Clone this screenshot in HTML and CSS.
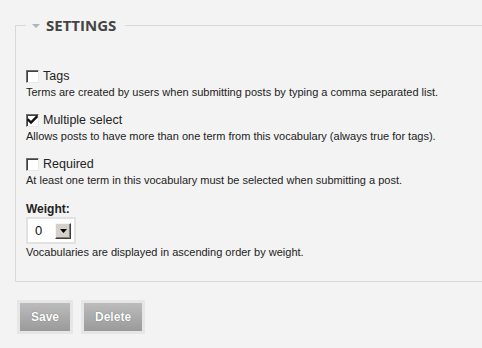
FILE: index.html
```html
<!DOCTYPE html>
<html>
<head>
<meta charset="utf-8">
<link rel="stylesheet" href="styles.css">
</head>
<body>
<form class="page">
  <fieldset class="settings">
    <legend class="legend"><span class="arrow"></span><span class="legend-text">SETTINGS</span></legend>

    <div class="item">
      <label class="check-row"><span class="box"></span><span class="label">Tags</span></label>
      <div class="desc">Terms are created by users when submitting posts by typing a comma separated list.</div>
    </div>

    <div class="item">
      <label class="check-row"><span class="box"><svg viewBox="0 0 11 11" width="11" height="11"><path d="M1.5 5 L4 7.5 L9.5 2" fill="none" stroke="#111" stroke-width="2.4" stroke-linecap="square"/></svg></span><span class="label">Multiple select</span></label>
      <div class="desc">Allows posts to have more than one term from this vocabulary (always true for tags).</div>
    </div>

    <div class="item">
      <label class="check-row"><span class="box"></span><span class="label">Required</span></label>
      <div class="desc">At least one term in this vocabulary must be selected when submitting a post.</div>
    </div>

    <div class="item weight">
      <div class="weight-label">Weight:</div>
      <div class="select">
        <span class="select-value">0</span>
        <span class="select-btn"><svg viewBox="0 0 7 4" width="7" height="4"><path d="M0 0 H7 L3.5 4 Z" fill="#000"/></svg></span>
      </div>
      <div class="desc desc-tight">Vocabularies are displayed in ascending order by weight.</div>
    </div>
  </fieldset>

  <div class="actions">
    <span class="btn-frame"><button type="button" class="btn">Save</button></span>
    <span class="btn-frame"><button type="button" class="btn">Delete</button></span>
  </div>
</form>
</body>
</html>
```
FILE: styles.css
```css
html, body {
  margin: 0;
  padding: 0;
  background: #f3f3f3;
  overflow: hidden;
}

body {
  font-family: "Liberation Sans", Arial, sans-serif;
  color: #222;
  width: 482px;
  height: 348px;
}

.page {
  padding-top: 15px;
}

.settings {
  margin: 0 -20px 0 15px;
  padding: 34px 10px 22px 10px;
  border: 1px solid #d8d8d8;
  min-width: 0;
}

.legend {
  padding: 0 9px 0 6px;
  height: 20px;
  line-height: 20px;
  display: flex;
  align-items: center;
}

.arrow {
  width: 0;
  height: 0;
  border-left: 4px solid transparent;
  border-right: 4px solid transparent;
  border-top: 4px solid #b4b4b4;
  margin-right: 6px;
  margin-top: 1px;
}

.legend-text {
  font-family: "Open Sans", sans-serif;
  font-weight: 700;
  font-size: 15px;
  letter-spacing: 0;
  color: #444;
}

.item {
  margin-bottom: 14px;
}

.check-row {
  display: flex;
  align-items: center;
  height: 14px;
}

.box {
  width: 11px;
  height: 11px;
  box-sizing: content-box;
  background: #fff;
  border: 1px solid;
  border-color: #6e6e6e #e8e8e8 #e8e8e8 #6e6e6e;
  box-shadow: inset 1px 1px 0 #404040;
  display: flex;
  align-items: center;
  justify-content: center;
  margin-right: 4px;
}

.box svg {
  display: block;
}

.label {
  font-size: 12.5px;
  line-height: 14px;
}

.desc {
  font-size: 11px;
  line-height: 14px;
  margin-top: 2px;
}

.weight {
  margin-top: 15px;
  margin-bottom: 0;
}

.weight-label {
  font-size: 12px;
  font-weight: 700;
  line-height: 14px;
}

.select {
  margin-top: 1px;
  height: 23px;
  width: 36px;
  background: #fff;
  border: 2px solid #e2e2e2;
  display: flex;
  align-items: center;
  justify-content: space-between;
  padding: 0 3px 0 7px;
  box-sizing: content-box;
}

.select-value {
  font-size: 13px;
  color: #111;
}

.select-btn {
  width: 14px;
  height: 14px;
  background: #d4d0c8;
  border: 1px solid;
  border-color: #f4f4f4 #404040 #404040 #f4f4f4;
  box-shadow: inset -1px -1px 0 #808080;
  display: flex;
  align-items: center;
  justify-content: center;
}

.select-btn svg {
  display: block;
}

.desc-tight {
  margin-top: 1px;
}

.actions {
  display: flex;
  gap: 8px;
  padding: 18px 0 0 17px;
}

.btn-frame {
  display: block;
  background: #e6e6e6;
  padding: 3px;
}

.btn {
  display: block;
  height: 28px;
  border: 0;
  margin: 0;
  padding: 0 11px;
  background: linear-gradient(#bcbcbc, #9a9a9a);
  color: #fff;
  font-family: "Liberation Sans", Arial, sans-serif;
  font-weight: 700;
  font-size: 12px;
  text-shadow: 0 0 1px rgba(0,0,0,0.45);
  cursor: pointer;
}
```
